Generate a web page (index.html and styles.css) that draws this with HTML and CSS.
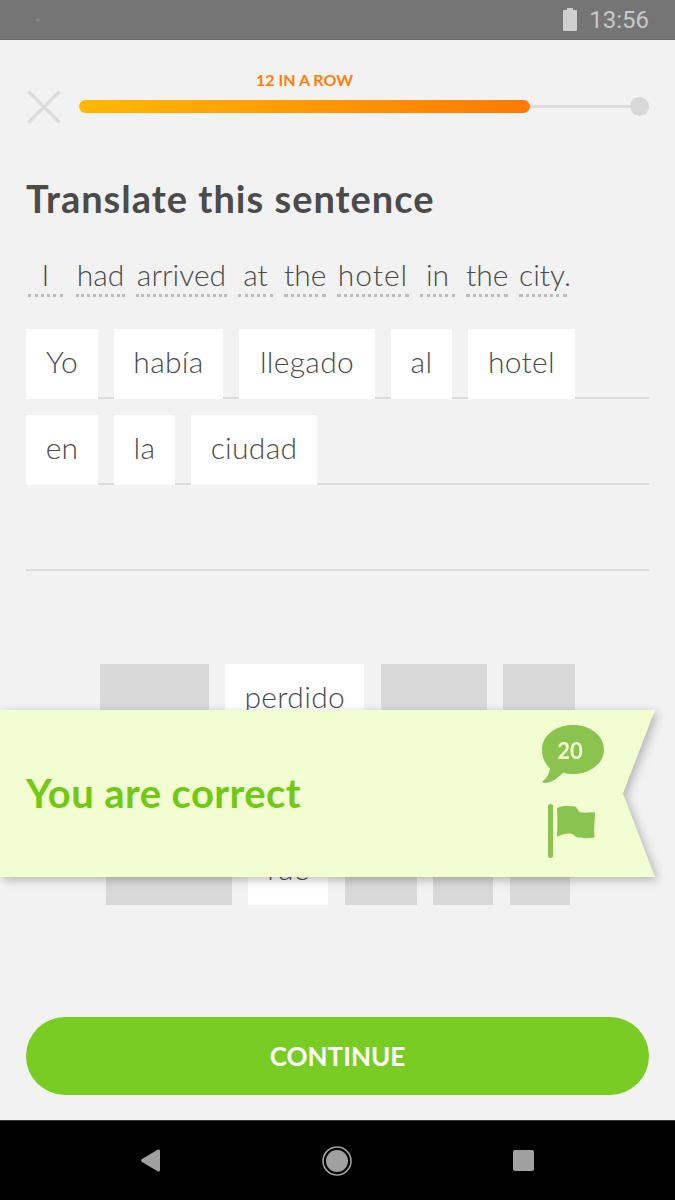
FILE: index.html
```html
<!DOCTYPE html>
<html>
<head>
	<title>Translate this sentence</title>
	<link rel="stylesheet" href="styles.css">
</head>
<body>
	<div class="phone">
		<div class="status-bar">
			<div class="status-dot"></div>
			<svg class="battery" width="14" height="23" viewBox="0 0 14 23">
				<path d="M4 0h6v2h3a1 1 0 0 1 1 1v19a1 1 0 0 1-1 1H1a1 1 0 0 1-1-1V3a1 1 0 0 1 1-1h3z" fill="#cfcfcf"/>
			</svg>
			<div class="clock">13:56</div>
		</div>

		<div class="lesson">
			<div class="top-row">
				<svg class="close-icon" width="34" height="34" viewBox="0 0 34 34">
					<path d="M1.5 1.5L32.5 32.5M32.5 1.5L1.5 32.5" stroke="#dcdcdc" stroke-width="3.4" fill="none"/>
				</svg>
				<div class="progress-wrap">
					<div class="streak">12 IN A ROW</div>
					<div class="progress">
						<div class="progress-fill"></div>
						<div class="progress-track"></div>
						<div class="progress-knob"></div>
					</div>
				</div>
			</div>

			<h1 class="title">Translate this sentence</h1>

			<div class="sentence">
				<span class="hint hint-i">I</span>
				<span class="hint hint-had">had</span>
				<span class="hint hint-arrived">arrived</span>
				<span class="hint hint-short">at</span>
				<span class="hint hint-the">the</span>
				<span class="hint hint-hotel">hotel</span>
				<span class="hint hint-short">in</span>
				<span class="hint hint-the">the</span>
				<span class="hint hint-city">city.</span>
			</div>

			<div class="answer">
				<div class="answer-row">
					<div class="tile w-72">Yo</div>
					<div class="tile w-109">había</div>
					<div class="tile w-136">llegado</div>
					<div class="tile w-61">al</div>
					<div class="tile w-107">hotel</div>
				</div>
				<div class="answer-row">
					<div class="tile w-72">en</div>
					<div class="tile w-61">la</div>
					<div class="tile w-126">ciudad</div>
				</div>
				<div class="answer-row"></div>
			</div>

			<div class="bank">
				<div class="bank-row">
					<div class="slot w-109"></div>
					<div class="tile w-139">perdido</div>
					<div class="slot w-106"></div>
					<div class="slot w-72"></div>
				</div>
				<div class="bank-row">
					<div class="slot w-106"></div>
					<div class="slot w-72"></div>
				</div>
				<div class="bank-row">
					<div class="slot w-126"></div>
					<div class="tile w-80">fue</div>
					<div class="slot w-72"></div>
					<div class="slot w-60"></div>
					<div class="slot w-60"></div>
				</div>
			</div>

			<div class="continue">CONTINUE</div>

			<div class="banner-shadow">
				<div class="banner">
					<div class="banner-text">You are correct</div>
					<div class="banner-icons">
						<div class="bubble">
							<svg width="62" height="58" viewBox="0 0 62 58">
								<path d="M31 0C48 0 62 10.500 62 24.500C62 38.500 48 49 31 49C27.500 49 24 48.500 21 47.700C16 53 9.500 58 2 58C0.500 58 0 56.800 1 56C5 52.500 7.500 48 8 43.500C3 39 0 32.500 0 24.500C0 10.500 14 0 31 0Z" fill="#8bc34f"/>
							</svg>
							<span class="bubble-count">20</span>
						</div>
						<svg class="flag" width="48" height="54" viewBox="0 0 48 54">
							<rect x="0" y="0" width="5" height="54" rx="2.500" fill="#8bc34f"/>
							<path d="M9 4C15 1 22 2 27 2.500C29 3 30 8 33 8.500C37 9 42 8 47 8.500C47 16 45.500 24 46.500 33.500C41 34.500 34 34.500 28 33C25 30 23 29 20 29.500C16 30 12 31.500 9 32.500C9.500 23 9.500 13 9 4Z" fill="#8bc34f"/>
						</svg>
					</div>
				</div>
			</div>
		</div>

		<div class="nav-bar">
			<svg width="19" height="23" viewBox="0 0 19 23">
				<path d="M17 0.500a1.500 1.500 0 0 1 2 1.500v19a1.500 1.500 0 0 1-2 1.500L1 13a1.700 1.700 0 0 1 0-3z" fill="#a0a0a0"/>
			</svg>
			<svg width="30" height="30" viewBox="0 0 30 30">
				<circle cx="15" cy="15" r="14" fill="none" stroke="#a0a0a0" stroke-width="1.600"/>
				<circle cx="15" cy="15" r="11" fill="#a0a0a0"/>
			</svg>
			<div class="nav-square"></div>
		</div>
	</div>
</body>
</html>
```

FILE: styles.css
```css
body{
	margin: 0;
	font-family: "Lato", "Open Sans", sans-serif;
	color: #4b4b4b;
}
.phone{
	width: 675px;
	height: 1200px;
	display: flex;
	flex-direction: column;
	overflow: hidden;
}

/* android bars */
.status-bar{
	height: 39px;
	background-color: #757575;
	border-bottom: 1px solid #6a6a6a;
	display: flex;
	align-items: center;
	padding: 0 26px 0 36px;
}
.status-dot{
	width: 4px;
	height: 4px;
	border-radius: 50%;
	background-color: #828282;
	margin-right: auto;
}
.battery{
	margin-right: 12px;
}
.clock{
	font-family: "Roboto", sans-serif;
	font-size: 24px;
	color: #c8c8c8;
	padding-top: 1px;
}
.nav-bar{
	height: 79px;
	background-color: #000;
	border-top: 1px solid #3a3a3a;
	display: flex;
	align-items: center;
	padding: 0 141px;
	justify-content: space-between;
}
.nav-square{
	width: 21px;
	height: 21px;
	border-radius: 2px;
	background-color: #a0a0a0;
}

/* lesson */
.lesson{
	position: relative;
	flex: 1;
	background-color: #f2f2f2;
	padding: 0 26px 25px;
	display: flex;
	flex-direction: column;
}
.top-row{
	display: flex;
	align-items: flex-end;
	padding-top: 31px;
	height: 53px;
}
.close-icon{
	margin: 0 18px 0 1px;
	flex: none;
}
.progress-wrap{
	flex: 1;
	margin-bottom: 8px;
}
.streak{
	width: 451px;
	text-align: center;
	font-size: 16px;
	font-weight: 700;
	line-height: 20px;
	color: #ff7f0a;
	margin-bottom: 7px;
}
.progress{
	display: flex;
	align-items: center;
	height: 19px;
}
.progress-fill{
	width: 451px;
	height: 13px;
	border-radius: 7px;
	background: linear-gradient(to right, #ffb900, #ff7a00);
}
.progress-track{
	flex: 1;
	height: 3px;
	background-color: #dcdcdc;
}
.progress-knob{
	width: 19px;
	height: 19px;
	border-radius: 50%;
	background-color: #d8d8d8;
}
.title{
	font-size: 38px;
	font-weight: 700;
	letter-spacing: 1px;
	line-height: 44px;
	margin: 52px 0 0;
	color: #4b4b4b;
}
.sentence{
	display: flex;
	gap: 11px;
	margin-top: 34px;
	padding-left: 2px;
	font-size: 30px;
	font-weight: 300;
	line-height: 40px;
}
.hint{
	border-bottom: 3px dotted #bdbdbd;
	text-align: center;
	white-space: nowrap;
}
.hint-i{
	width: 35px;
	margin-right: 2px;
}
.hint-had{ width: 49px; }
.hint-arrived{ width: 91px; }
.hint-short{ width: 35px; }
.hint-the{ width: 42px; }
.hint-hotel{
	width: 72px;
	letter-spacing: 1px;
}
.hint-city{
	width: 48px;
	text-align: left;
}
.answer{
	margin-top: 32px;
}
.answer-row{
	height: 68px;
	margin-bottom: 16px;
	border-bottom: 2px solid #dcdcdc;
	display: flex;
	gap: 16px;
}
.tile{
	height: 70px;
	flex: none;
	background-color: #fff;
	font-size: 30px;
	font-weight: 300;
	letter-spacing: 0.3px;
	line-height: 65px;
	text-align: center;
}
.bank{
	margin-top: 77px;
	display: flex;
	flex-direction: column;
	gap: 17px;
}
.bank-row{
	display: flex;
	justify-content: center;
	gap: 16.5px;
}
.bank .tile{
	height: 69px;
}
.slot{
	height: 69px;
	background-color: #d9d9d9;
}
.w-139{ width: 139px; }
.w-136{ width: 136px; }
.w-126{ width: 126px; }
.w-109{ width: 109px; }
.w-107{ width: 107px; }
.w-106{ width: 106px; }
.w-80{ width: 80px; }
.w-72{ width: 72px; }
.w-61{ width: 61px; }
.w-60{ width: 60px; }
.continue{
	margin-top: auto;
	height: 78px;
	border-radius: 39px;
	background-color: #78cc23;
	color: #fff;
	font-size: 26px;
	font-weight: 700;
	line-height: 78px;
	text-align: center;
}

/* answer banner, lies over the word bank */
.banner-shadow{
	position: absolute;
	left: 0;
	top: 670px;
	filter: drop-shadow(3px 3px 5px rgba(0,0,0,0.25));
}
.banner{
	width: 655px;
	height: 167px;
	box-sizing: border-box;
	padding: 0 51px 0 26px;
	background-color: #f2fdd2;
	clip-path: polygon(0 0, 100% 0, 623px 50%, 100% 100%, 0 100%);
	display: flex;
	align-items: center;
	justify-content: space-between;
}
.banner-text{
	font-size: 40px;
	font-weight: 700;
	letter-spacing: 0.4px;
	color: #72c813;
	padding-bottom: 2px;
}
.banner-icons{
	display: flex;
	flex-direction: column;
	gap: 21px;
	width: 62px;
	margin-top: -5px;
}
.bubble{
	position: relative;
	height: 58px;
}
.bubble svg{
	display: block;
}
.bubble-count{
	position: absolute;
	left: -3px;
	top: 11px;
	width: 100%;
	text-align: center;
	font-size: 22px;
	font-weight: 700;
	line-height: 30px;
	color: #f2fdd2;
}
.flag{
	display: block;
	margin-left: 6px;
}
```
